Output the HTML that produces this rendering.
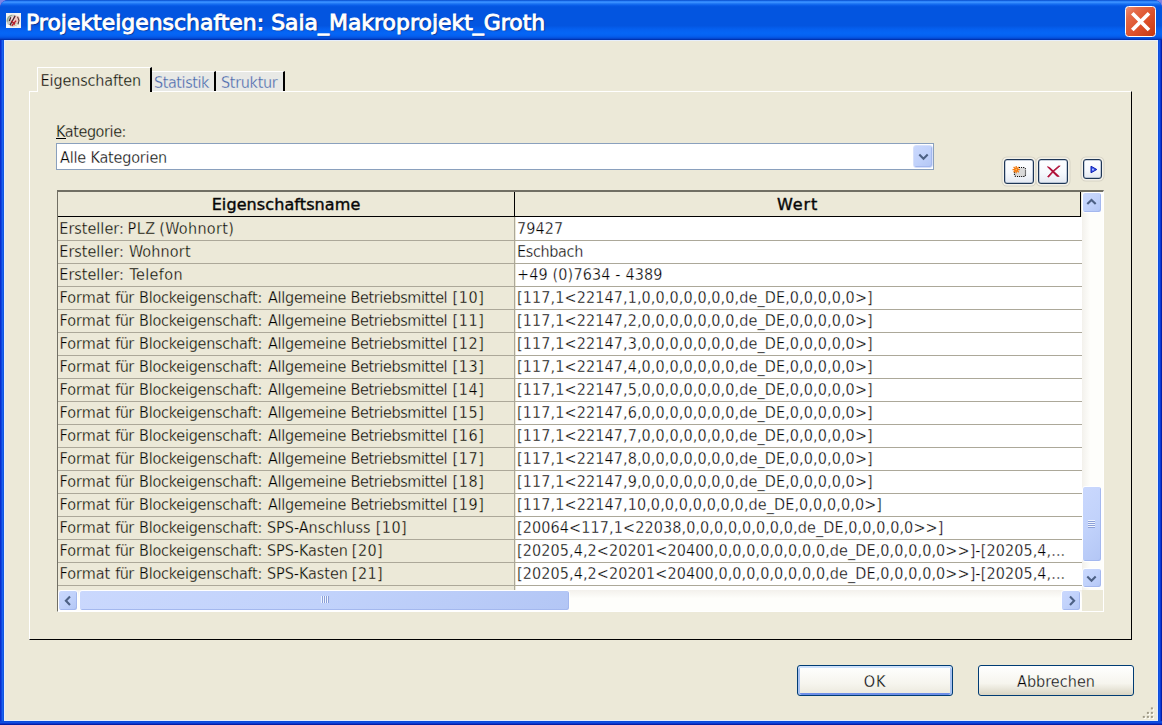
<!DOCTYPE html>
<html lang="de">
<head>
<meta charset="utf-8">
<title>Projekteigenschaften: Saia_Makroprojekt_Groth</title>
<style>
html,body{margin:0;padding:0;background:#7d84e6;}
body{width:1162px;height:725px;overflow:hidden;background:#7d84e6;position:relative;
  font-family:"DejaVu Sans Condensed","DejaVu Sans","Liberation Sans",sans-serif;font-size:16px;color:#000;-webkit-text-stroke:0.3px #ece9d8;}
.abs{position:absolute;}
.t{position:absolute;white-space:nowrap;line-height:20px;height:20px;}
#win{position:absolute;left:0;top:0;width:1162px;height:725px;background:#0a3fd8;border-radius:8px 8px 0 0;overflow:hidden;}
#titlebar{position:absolute;left:0;top:0;width:1162px;height:40px;border-radius:8px 8px 0 0;
  background:linear-gradient(to bottom,#0347c8 0%,#2d84fa 3.5%,#3b90ff 6%,#2078f4 9%,#0a5fea 13%,#0355e0 17%,#0355e0 64%,#0560f0 73%,#0566f6 83%,#0560f0 90%,#0450dc 95%,#0440c4 97.4%,#0033b0 97.6%,#0033b0 100%);}
#title{position:absolute;left:26px;top:10px;height:26px;line-height:26px;color:#fff;font-family:"DejaVu Sans","Liberation Sans",sans-serif;font-weight:normal;-webkit-text-stroke:0.85px #fff;font-size:20.5px;white-space:nowrap;text-shadow:1px 1px 1px #0a2a80;transform-origin:0 0;transform:scaleX(1.07);}
#client{position:absolute;left:4px;top:40px;width:1154px;height:681px;box-sizing:border-box;background:#ece9d8;border:1px solid #e6eefc;}
#closebtn{position:absolute;left:1125px;top:6px;width:31px;height:31px;box-sizing:border-box;border:1.5px solid #fff;border-radius:3.5px;
  background:linear-gradient(135deg,#ec9078 0%,#e46a48 22%,#dd4f28 60%,#c43810 100%);}
.row{position:absolute;left:0;width:1024px;border-bottom:1px solid #aca899;}
.c1{position:absolute;left:0;top:0;bottom:0;width:455px;line-height:22px;padding-left:1px;white-space:nowrap;overflow:hidden;background:#ece9d8;border-right:1px solid #aca899;}
.c2{position:absolute;left:458px;top:0;bottom:0;width:565px;line-height:22px;padding-left:1px;white-space:nowrap;overflow:hidden;background:#fff;-webkit-text-stroke:0.3px #fff;}
.row:first-child .c1,.row:first-child .c2{line-height:23px;}
.w{position:absolute;top:0;white-space:nowrap;}
.sbtn{position:absolute;box-sizing:border-box;border:1px solid #fff;border-radius:3px;background:linear-gradient(135deg,#cad8fd 0%,#c1d2fb 50%,#b3c6f5 100%);box-shadow:inset -1px -1px 0 #a4b8ee;}
.xbtn{position:absolute;box-sizing:border-box;border:1px solid #1e3656;border-radius:3px;background:linear-gradient(to bottom,#fdfeff 0%,#f6f9fd 55%,#e4e9f2 100%);box-shadow:inset 0 0 0 0.5px rgba(60,90,130,.55),0 0 0 1.5px #f3f1e8,0 0 0 2.5px #d6d3c4;}
</style>
</head>
<body>
<div id="win">
  <div id="titlebar">
    <svg class="abs" style="left:6px;top:13px" width="15.4" height="15.2" viewBox="0 0 16 16" preserveAspectRatio="none">
      <rect x="0" y="0" width="16" height="16" fill="#f4f2f0"/>
      <circle cx="7" cy="8" r="6.5" fill="#c9c8c0"/>
      <path d="M1.5 9 A6 6 0 0 1 6 2.5" fill="none" stroke="#8fa890" stroke-width="1.6"/>
      <ellipse cx="10.5" cy="6.5" rx="4" ry="3.6" fill="#f3c8c4"/>
      <ellipse cx="6" cy="6" rx="2" ry="2.2" fill="#f6dcdc"/>
      <path d="M9.5 3 L4 13 M5 4.5 L3.5 8.5" fill="none" stroke="#4a2630" stroke-width="1.3"/>
      <path d="M5.5 8.5 L11 13.5 M10.5 8 L6 13.5" fill="none" stroke="#b8202c" stroke-width="1.5"/>
      <path d="M12 4 L13.5 8 L12.5 12" fill="none" stroke="#5a3a38" stroke-width="1.1"/>
      <circle cx="10.5" cy="12.5" r="1.3" fill="#dfe6c8"/>
      <rect x="0" y="12.5" width="4" height="3.5" fill="#fbfbfb"/>
    </svg>
    <div id="title">Projekteigenschaften: Saia_Makroprojekt_Groth</div>
    <div id="closebtn">
      <svg class="abs" style="left:-1.5px;top:-1.5px" width="31" height="31" viewBox="0 0 31 31">
        <path d="M7.3 7.2 L24 24 M24 7.2 L7.3 24" stroke="#fff" stroke-width="3.7" stroke-linecap="butt"/>
      </svg>
    </div>
  </div>
  <div class="abs" style="left:0;top:40px;width:4px;height:685px;background:linear-gradient(to right,#0a24c4,#0a3cdc 30%,#1a62ee 60%,#0a50dc);"></div>
  <div class="abs" style="left:1158px;top:40px;width:4px;height:685px;background:linear-gradient(to left,#00138c,#0a30d0 30%,#1558e6 60%,#0a48d8);"></div>
  <div class="abs" style="left:0;top:721px;width:1162px;height:4px;background:linear-gradient(to top,#00138c,#0a2cc8 30%,#1250e0 60%,#0a48d8);"></div>
  <div id="client"></div>
</div>

<!-- tab panel -->
<div class="abs" style="left:29px;top:91px;width:1103px;height:549px;box-sizing:border-box;border-left:1px solid #fff;border-top:1px solid #fff;border-right:1px solid #000;border-bottom:1px solid #000;"></div>
<!-- active tab -->
<div class="abs" style="left:37px;top:67px;width:115px;height:25px;box-sizing:border-box;background:#ece9d8;border-left:1px solid #fff;border-top:1px solid #fff;border-right:2px solid #000;"></div>
<div class="t" style="left:40.6px;top:71px;letter-spacing:-0.13px;">Eigenschaften</div>
<!-- inactive tabs -->
<div class="abs" style="left:152px;top:71px;width:64px;height:20px;box-sizing:border-box;border-top:1px solid #fff;border-right:2px solid #000;background:#e8e9e6;"></div>
<div class="t" style="left:154px;top:73px;color:#3c5ea8;letter-spacing:-0.41px;-webkit-text-stroke:0.3px #e8e9e6;">Statistik</div>
<div class="abs" style="left:216px;top:71px;width:69px;height:20px;box-sizing:border-box;border-top:1px solid #fff;border-right:2px solid #000;background:#e8e9e6;"></div>
<div class="t" style="left:221px;top:73px;color:#3c5ea8;letter-spacing:-0.3px;-webkit-text-stroke:0.3px #e8e9e6;">Struktur</div>

<!-- Kategorie -->
<div class="t" style="left:56px;top:122px;letter-spacing:-0.4px;">Kategorie:</div>
<div class="abs" style="left:56px;top:138px;width:10px;height:1px;background:#000;"></div>
<div class="abs" style="left:56px;top:143px;width:878px;height:27px;box-sizing:border-box;border:1px solid #8aa0bd;background:#fff;"></div>
<div class="t" style="left:60px;top:148px;letter-spacing:-0.17px;-webkit-text-stroke:0.3px #fff;">Alle Kategorien</div>
<div class="sbtn" style="left:913px;top:145px;width:20px;height:23px;border-color:#d6e0fb;">
  <svg class="abs" style="left:3.5px;top:7px" width="11" height="8" viewBox="0 0 11 8"><path d="M1.3 1.6 L5.5 5.7 L9.7 1.6" fill="none" stroke="#4d6185" stroke-width="2.1"/></svg>
</div>

<!-- small buttons -->
<div class="xbtn" style="left:1004px;top:159px;width:30px;height:25px;">
  <svg class="abs" style="left:-1px;top:-1px" width="30" height="25" viewBox="0 0 30 25">
        <path d="M15 8.5 H19.5 L21.5 10.5 V17.5 H10.5 V13 Z" fill="#d9d9d9"/>
    <path d="M15 8.5 H19.5 Q21.5 8.5 21.5 10.5 V15.5 Q21.5 17.5 19.5 17.5 H12.5 Q10.5 17.5 10.5 15.5 V13" fill="none" stroke="#000" stroke-width="1.15" stroke-dasharray="1 1.06"/>
    <g stroke="#f47c12" stroke-width="1.3" stroke-linecap="butt"><path d="M12.2 6.9 V14.3 M8.5 10.6 H15.9 M9.6 8 L14.8 13.2 M14.8 8 L9.6 13.2"/></g>
    <circle cx="12.2" cy="10.6" r="1.9" fill="#f4780c"/>
    <circle cx="12.2" cy="10.6" r="0.8" fill="#ffc060"/>
  </svg>
</div>
<div class="xbtn" style="left:1038px;top:159px;width:30px;height:25px;">
  <svg class="abs" style="left:-1px;top:-1px" width="30" height="25" viewBox="0 0 30 25">
    <path d="M9 7.3 Q11 7.2 12.4 8.8 L21.8 17.4 L20 18 Q18.6 17.6 17.6 16.4 L9.4 8.2 Z" fill="#b01038"/>
    <path d="M22.2 6.9 L20.6 7 Q14 12 9.6 17.6 L10.6 18.2 Q15 12.4 22.2 6.9 Z" fill="#b01038" stroke="#b01038" stroke-width="0.7"/>
  </svg>
</div>
<div class="xbtn" style="left:1083px;top:159px;width:19px;height:20px;">
  <svg class="abs" style="left:6px;top:5px" width="8" height="9" viewBox="0 0 8 9"><path d="M1 1.2 V7.8 L6.8 4.5 Z" fill="#3050f0" stroke="#1020b0" stroke-width="1"/><rect x="2" y="3.7" width="1.8" height="1.8" fill="#b0c0ff"/></svg>
</div>

<!-- table -->
<div id="grid" class="abs" style="left:57px;top:190px;width:1047px;height:422px;box-sizing:border-box;border-left:1px solid #716f64;border-top:2px solid #716f64;border-right:1px solid #fff;border-bottom:1px solid #fff;background:#ece9d8;overflow:hidden;">
  <!-- header -->
  <div class="abs" style="left:0;top:0;width:1023px;height:25px;box-sizing:border-box;border-bottom:1px solid #000;border-right:1px solid #000;background:#ece9d8;"></div>
  <div class="abs" style="left:0;top:0;width:456px;height:24px;border-right:1px solid #000;line-height:25px;text-align:center;font-family:'DejaVu Sans','Liberation Sans',sans-serif;-webkit-text-stroke:0.45px #1a1a1a;letter-spacing:0.1px;">Eigenschaftsname</div>
  <div class="abs" style="left:457px;top:0;width:565px;height:24px;line-height:25px;text-align:center;font-family:'DejaVu Sans','Liberation Sans',sans-serif;-webkit-text-stroke:0.45px #1a1a1a;letter-spacing:0.9px;">Wert</div>
  <div id="rows" class="abs" style="left:0;top:25px;width:1024px;height:373px;overflow:hidden;">
    <div class="row" style="top:0px;height:23px"><div class="c1"><span class="w" style="left:1.33px;letter-spacing:0.006px">Ersteller:</span> <span class="w" style="left:69.53px;letter-spacing:0.5px">PLZ</span> <span class="w" style="left:101.25px;letter-spacing:0.325px">(Wohnort)</span></div><div class="c2" style="letter-spacing:0.09px">79427</div></div>
    <div class="row" style="top:24px;height:22px"><div class="c1"><span class="w" style="left:1.33px;letter-spacing:0.006px">Ersteller:</span> <span class="w" style="left:70.9px;letter-spacing:0.154px">Wohnort</span></div><div class="c2" style="letter-spacing:-0.34px">Eschbach</div></div>
    <div class="row" style="top:47px;height:22px"><div class="c1"><span class="w" style="left:1.33px;letter-spacing:0.006px">Ersteller:</span> <span class="w" style="left:71.4px;letter-spacing:0.417px">Telefon</span></div><div class="c2" style="letter-spacing:0.15px">+49 (0)7634 - 4389</div></div>
    <div class="row" style="top:70px;height:22px"><div class="c1"><span class="w" style="left:1.62px;letter-spacing:-0.035px">Format</span> <span class="w" style="left:57.22px;letter-spacing:-0.575px">für</span> <span class="w" style="left:81.12px;letter-spacing:-0.236px">Blockeigenschaft:</span> <span class="w" style="left:209.88px;letter-spacing:-0.239px">Allgemeine</span> <span class="w" style="left:292.52px;letter-spacing:-0.373px">Betriebsmittel</span> <span class="w" style="left:394.45px;letter-spacing:0.625px">[10]</span></div><div class="c2" style="letter-spacing:0.11px">[117,1&lt;22147,1,0,0,0,0,0,0,0,de_DE,0,0,0,0,0&gt;]</div></div>
    <div class="row" style="top:93px;height:22px"><div class="c1"><span class="w" style="left:1.62px;letter-spacing:-0.035px">Format</span> <span class="w" style="left:57.22px;letter-spacing:-0.575px">für</span> <span class="w" style="left:81.12px;letter-spacing:-0.236px">Blockeigenschaft:</span> <span class="w" style="left:209.88px;letter-spacing:-0.239px">Allgemeine</span> <span class="w" style="left:292.52px;letter-spacing:-0.373px">Betriebsmittel</span> <span class="w" style="left:394.45px;letter-spacing:0.625px">[11]</span></div><div class="c2" style="letter-spacing:0.11px">[117,1&lt;22147,2,0,0,0,0,0,0,0,de_DE,0,0,0,0,0&gt;]</div></div>
    <div class="row" style="top:116px;height:22px"><div class="c1"><span class="w" style="left:1.62px;letter-spacing:-0.035px">Format</span> <span class="w" style="left:57.22px;letter-spacing:-0.575px">für</span> <span class="w" style="left:81.12px;letter-spacing:-0.236px">Blockeigenschaft:</span> <span class="w" style="left:209.88px;letter-spacing:-0.239px">Allgemeine</span> <span class="w" style="left:292.52px;letter-spacing:-0.373px">Betriebsmittel</span> <span class="w" style="left:394.45px;letter-spacing:0.625px">[12]</span></div><div class="c2" style="letter-spacing:0.11px">[117,1&lt;22147,3,0,0,0,0,0,0,0,de_DE,0,0,0,0,0&gt;]</div></div>
    <div class="row" style="top:139px;height:22px"><div class="c1"><span class="w" style="left:1.62px;letter-spacing:-0.035px">Format</span> <span class="w" style="left:57.22px;letter-spacing:-0.575px">für</span> <span class="w" style="left:81.12px;letter-spacing:-0.236px">Blockeigenschaft:</span> <span class="w" style="left:209.88px;letter-spacing:-0.239px">Allgemeine</span> <span class="w" style="left:292.52px;letter-spacing:-0.373px">Betriebsmittel</span> <span class="w" style="left:394.45px;letter-spacing:0.625px">[13]</span></div><div class="c2" style="letter-spacing:0.11px">[117,1&lt;22147,4,0,0,0,0,0,0,0,de_DE,0,0,0,0,0&gt;]</div></div>
    <div class="row" style="top:162px;height:22px"><div class="c1"><span class="w" style="left:1.62px;letter-spacing:-0.035px">Format</span> <span class="w" style="left:57.22px;letter-spacing:-0.575px">für</span> <span class="w" style="left:81.12px;letter-spacing:-0.236px">Blockeigenschaft:</span> <span class="w" style="left:209.88px;letter-spacing:-0.239px">Allgemeine</span> <span class="w" style="left:292.52px;letter-spacing:-0.373px">Betriebsmittel</span> <span class="w" style="left:394.45px;letter-spacing:0.625px">[14]</span></div><div class="c2" style="letter-spacing:0.11px">[117,1&lt;22147,5,0,0,0,0,0,0,0,de_DE,0,0,0,0,0&gt;]</div></div>
    <div class="row" style="top:185px;height:22px"><div class="c1"><span class="w" style="left:1.62px;letter-spacing:-0.035px">Format</span> <span class="w" style="left:57.22px;letter-spacing:-0.575px">für</span> <span class="w" style="left:81.12px;letter-spacing:-0.236px">Blockeigenschaft:</span> <span class="w" style="left:209.88px;letter-spacing:-0.239px">Allgemeine</span> <span class="w" style="left:292.52px;letter-spacing:-0.373px">Betriebsmittel</span> <span class="w" style="left:394.45px;letter-spacing:0.625px">[15]</span></div><div class="c2" style="letter-spacing:0.11px">[117,1&lt;22147,6,0,0,0,0,0,0,0,de_DE,0,0,0,0,0&gt;]</div></div>
    <div class="row" style="top:208px;height:22px"><div class="c1"><span class="w" style="left:1.62px;letter-spacing:-0.035px">Format</span> <span class="w" style="left:57.22px;letter-spacing:-0.575px">für</span> <span class="w" style="left:81.12px;letter-spacing:-0.236px">Blockeigenschaft:</span> <span class="w" style="left:209.88px;letter-spacing:-0.239px">Allgemeine</span> <span class="w" style="left:292.52px;letter-spacing:-0.373px">Betriebsmittel</span> <span class="w" style="left:394.45px;letter-spacing:0.625px">[16]</span></div><div class="c2" style="letter-spacing:0.11px">[117,1&lt;22147,7,0,0,0,0,0,0,0,de_DE,0,0,0,0,0&gt;]</div></div>
    <div class="row" style="top:231px;height:22px"><div class="c1"><span class="w" style="left:1.62px;letter-spacing:-0.035px">Format</span> <span class="w" style="left:57.22px;letter-spacing:-0.575px">für</span> <span class="w" style="left:81.12px;letter-spacing:-0.236px">Blockeigenschaft:</span> <span class="w" style="left:209.88px;letter-spacing:-0.239px">Allgemeine</span> <span class="w" style="left:292.52px;letter-spacing:-0.373px">Betriebsmittel</span> <span class="w" style="left:394.45px;letter-spacing:0.625px">[17]</span></div><div class="c2" style="letter-spacing:0.11px">[117,1&lt;22147,8,0,0,0,0,0,0,0,de_DE,0,0,0,0,0&gt;]</div></div>
    <div class="row" style="top:254px;height:22px"><div class="c1"><span class="w" style="left:1.62px;letter-spacing:-0.035px">Format</span> <span class="w" style="left:57.22px;letter-spacing:-0.575px">für</span> <span class="w" style="left:81.12px;letter-spacing:-0.236px">Blockeigenschaft:</span> <span class="w" style="left:209.88px;letter-spacing:-0.239px">Allgemeine</span> <span class="w" style="left:292.52px;letter-spacing:-0.373px">Betriebsmittel</span> <span class="w" style="left:394.45px;letter-spacing:0.625px">[18]</span></div><div class="c2" style="letter-spacing:0.11px">[117,1&lt;22147,9,0,0,0,0,0,0,0,de_DE,0,0,0,0,0&gt;]</div></div>
    <div class="row" style="top:277px;height:22px"><div class="c1"><span class="w" style="left:1.62px;letter-spacing:-0.035px">Format</span> <span class="w" style="left:57.22px;letter-spacing:-0.575px">für</span> <span class="w" style="left:81.12px;letter-spacing:-0.236px">Blockeigenschaft:</span> <span class="w" style="left:209.88px;letter-spacing:-0.239px">Allgemeine</span> <span class="w" style="left:292.52px;letter-spacing:-0.373px">Betriebsmittel</span> <span class="w" style="left:394.45px;letter-spacing:0.625px">[19]</span></div><div class="c2" style="letter-spacing:0.11px">[117,1&lt;22147,10,0,0,0,0,0,0,0,de_DE,0,0,0,0,0&gt;]</div></div>
    <div class="row" style="top:300px;height:22px"><div class="c1"><span class="w" style="left:1.62px;letter-spacing:-0.035px">Format</span> <span class="w" style="left:57.22px;letter-spacing:-0.575px">für</span> <span class="w" style="left:81.12px;letter-spacing:-0.236px">Blockeigenschaft:</span> <span class="w" style="left:208.9px;letter-spacing:0.013px">SPS-Anschluss</span> <span class="w" style="left:317.85px;letter-spacing:0.392px">[10]</span></div><div class="c2" style="letter-spacing:0.11px">[20064&lt;117,1&lt;22038,0,0,0,0,0,0,0,0,de_DE,0,0,0,0,0&gt;&gt;]</div></div>
    <div class="row" style="top:323px;height:22px"><div class="c1"><span class="w" style="left:1.62px;letter-spacing:-0.035px">Format</span> <span class="w" style="left:57.22px;letter-spacing:-0.575px">für</span> <span class="w" style="left:81.12px;letter-spacing:-0.236px">Blockeigenschaft:</span> <span class="w" style="left:208.9px;letter-spacing:-0.033px">SPS-Kasten</span> <span class="w" style="left:293.85px;letter-spacing:0.425px">[20]</span></div><div class="c2" style="letter-spacing:0.1px">[20205,4,2&lt;20201&lt;20400,0,0,0,0,0,0,0,0,de_DE,0,0,0,0,0&gt;&gt;]-[20205,4,...</div></div>
    <div class="row" style="top:346px;height:22px"><div class="c1"><span class="w" style="left:1.62px;letter-spacing:-0.035px">Format</span> <span class="w" style="left:57.22px;letter-spacing:-0.575px">für</span> <span class="w" style="left:81.12px;letter-spacing:-0.236px">Blockeigenschaft:</span> <span class="w" style="left:208.9px;letter-spacing:-0.033px">SPS-Kasten</span> <span class="w" style="left:293.85px;letter-spacing:0.425px">[21]</span></div><div class="c2" style="letter-spacing:0.1px">[20205,4,2&lt;20201&lt;20400,0,0,0,0,0,0,0,0,de_DE,0,0,0,0,0&gt;&gt;]-[20205,4,...</div></div>
    <div class="row" style="top:369px;height:22px"><div class="c1"></div><div class="c2"></div></div>
  </div>
  <!-- vertical scrollbar -->
  <div class="abs" style="left:1024px;top:0;width:21px;height:398px;background:linear-gradient(to right,#f3f1ec 0%,#fefefb 40%,#fefefb 100%);"></div>
  <div class="sbtn" style="left:1024px;top:0px;width:20px;height:21px;">
    <svg class="abs" style="left:3px;top:5px" width="11" height="8" viewBox="0 0 11 8"><path d="M1.3 6 L5.5 1.9 L9.7 6" fill="none" stroke="#4d6185" stroke-width="2.1"/></svg>
  </div>
  <div class="sbtn" style="left:1024px;top:294px;width:20px;height:76px;">
    <div class="abs" style="left:5px;top:33px;width:7px;height:1px;background:#eef4fe;box-shadow:0 1px 0 #8ca0d8,0 2px 0 #eef4fe,0 3px 0 #8ca0d8,0 4px 0 #eef4fe,0 5px 0 #8ca0d8,0 6px 0 #eef4fe,0 7px 0 #8ca0d8;"></div>
  </div>
  <div class="sbtn" style="left:1024px;top:376px;width:20px;height:20px;">
    <svg class="abs" style="left:3px;top:6px" width="11" height="8" viewBox="0 0 11 8"><path d="M1.3 1.6 L5.5 5.7 L9.7 1.6" fill="none" stroke="#4d6185" stroke-width="2.1"/></svg>
  </div>
  <!-- horizontal scrollbar -->
  <div class="abs" style="left:0;top:398px;width:1024px;height:21px;background:linear-gradient(to bottom,#f3f1ec 0%,#fefefb 40%,#fefefb 100%);"></div>
  <div class="sbtn" style="left:0px;top:398px;width:20px;height:21px;">
    <svg class="abs" style="left:4.5px;top:3.5px" width="8" height="12" viewBox="0 0 8 12"><path d="M6 1.6 L1.9 5.8 L6 10" fill="none" stroke="#4d6185" stroke-width="2.1"/></svg>
  </div>
  <div class="sbtn" style="left:21px;top:398px;width:491px;height:21px;">
    <div class="abs" style="left:241px;top:5px;width:1px;height:7px;background:#eef4fe;box-shadow:1px 0 0 #8ca0d8,2px 0 0 #eef4fe,3px 0 0 #8ca0d8,4px 0 0 #eef4fe,5px 0 0 #8ca0d8,6px 0 0 #eef4fe,7px 0 0 #8ca0d8;"></div>
  </div>
  <div class="sbtn" style="left:1003px;top:398px;width:20px;height:21px;">
    <svg class="abs" style="left:5.5px;top:3.5px" width="8" height="12" viewBox="0 0 8 12"><path d="M2 1.6 L6.1 5.8 L2 10" fill="none" stroke="#4d6185" stroke-width="2.1"/></svg>
  </div>
</div>

<!-- buttons -->
<div class="abs" style="left:797px;top:665px;width:156px;height:31px;box-sizing:border-box;border:1px solid #003c74;border-radius:3px;background:linear-gradient(to bottom,#fff,#f6f5ee 60%,#ebe8dc);box-shadow:inset 0 2px 0 #cfe2fc,inset 2px 0 0 #a9c2f0,inset -2px 0 0 #a9c2f0,inset 0 -2px 0 #6d8ee8;text-align:center;line-height:31px;letter-spacing:0.8px;-webkit-text-stroke:0.3px #f7f6f1;">OK</div>
<div class="abs" style="left:978px;top:665px;width:156px;height:31px;box-sizing:border-box;border:1px solid #003c74;border-radius:3px;background:linear-gradient(to bottom,#fff,#f6f5ee 60%,#d9d5c3);text-align:center;line-height:31px;letter-spacing:0.05px;-webkit-text-stroke:0.3px #f7f6f1;">Abbrechen</div>
<!-- size grip -->
<svg class="abs" style="left:1140px;top:704px" width="17" height="16" viewBox="1140 704 17 16">
  <g fill="#fffef6"><rect x="1151.9" y="708.4" width="2" height="2"/><rect x="1147.9" y="712.9" width="2" height="2"/><rect x="1151.9" y="712.9" width="2" height="2"/><rect x="1143.8" y="716.9" width="2" height="2"/><rect x="1147.9" y="716.9" width="2" height="2"/><rect x="1151.9" y="716.9" width="2" height="2"/></g>
  <g fill="#a09c88"><rect x="1150.9" y="707.4" width="2" height="2"/><rect x="1146.9" y="711.9" width="2" height="2"/><rect x="1150.9" y="711.9" width="2" height="2"/><rect x="1142.8" y="715.9" width="2" height="2"/><rect x="1146.9" y="715.9" width="2" height="2"/><rect x="1150.9" y="715.9" width="2" height="2"/></g>
</svg>
</body>
</html>
